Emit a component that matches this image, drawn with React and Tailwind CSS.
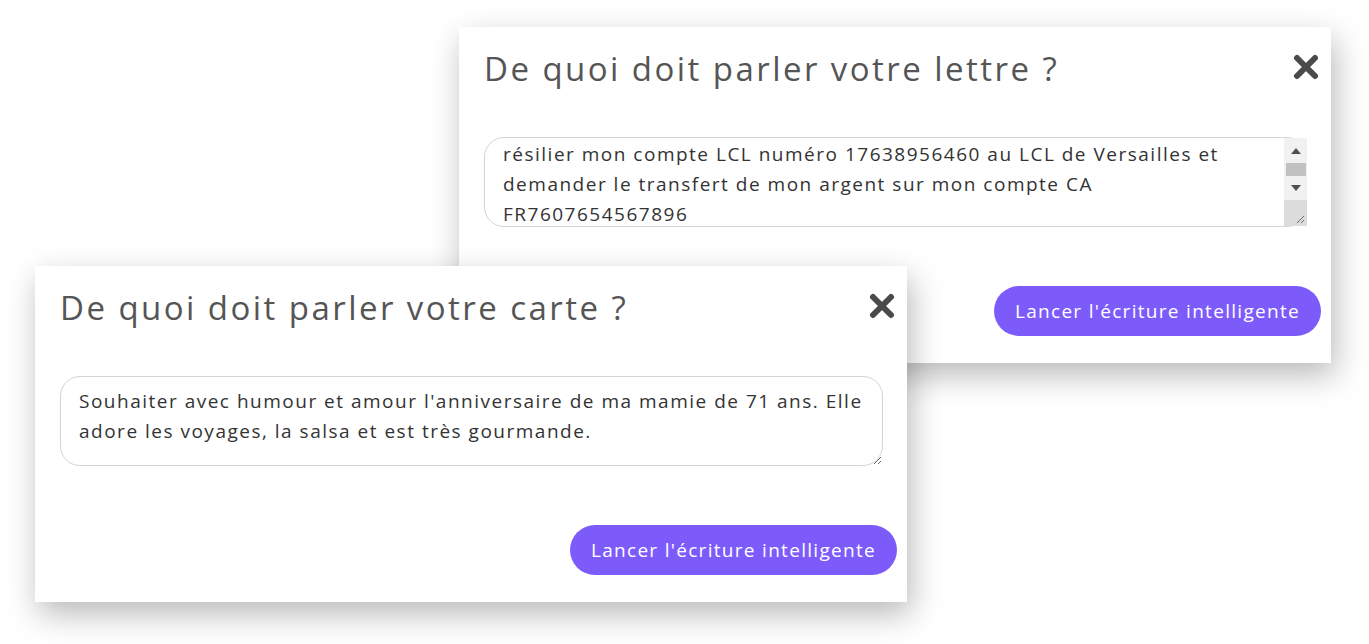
import React, { useEffect, useRef } from 'react';

const CloseIcon = () => (
  <svg width="26" height="26" viewBox="0 0 26 26" className="text-[#4a4a4a]">
    <path d="M4 4L22 22M22 4L4 22" stroke="currentColor" strokeWidth="6" strokeLinecap="round" />
  </svg>
);

// classic scrollbar look drawn over the textarea (the reference shows one)
const FakeScrollbar = () => (
  <div className="absolute right-0 top-[1px] bottom-[1px] w-[23px] flex flex-col">
    <div className="flex-1 bg-[#f1f1f1] flex flex-col items-center pt-[10px]">
      <svg width="10" height="6" viewBox="0 0 10 6">
        <path d="M5 0L10 6H0z" fill="#505050" />
      </svg>
      <div className="mt-[9px] w-[20px] h-[13px] bg-[#c1c1c1]" />
      <svg width="10" height="6" viewBox="0 0 10 6" className="mt-[9px]">
        <path d="M0 0H10L5 6z" fill="#505050" />
      </svg>
    </div>
    <div className="h-[26px] bg-[#dcdcdc] flex items-end justify-end p-[2px]">
      <svg width="10" height="10" viewBox="0 0 10 10">
        <path d="M9 2L2 9M9 6L6 9" stroke="#6b6b6b" strokeWidth="1" />
      </svg>
    </div>
  </div>
);

const PromptCard = ({ title, text, scrollTo, withScrollbar, className }) => {
  const areaRef = useRef(null);

  useEffect(() => {
    if (scrollTo && areaRef.current) {
      areaRef.current.scrollTop = scrollTo;
    }
  }, [scrollTo]);

  return (
    <div
      className={`absolute w-[872px] h-[336px] bg-white flex flex-col shadow-[4px_12px_30px_rgba(0,0,0,0.28)] ${className}`}
    >
      <div className="h-[80px] flex items-center justify-between pl-[25px] pr-[12px]">
        <h2 className="text-[33px] leading-none text-[#555555] tracking-[2.45px] pt-[2px]">{title}</h2>
        <button className="flex items-center justify-center">
          <CloseIcon />
        </button>
      </div>

      <div className="relative mt-[30px] ml-[25px] w-[823px] h-[90px]">
        <textarea
          ref={areaRef}
          defaultValue={text}
          className={`block w-full h-full rounded-[20px] border border-[#d4d4d4] pl-[18px] pt-[9px] pb-[9px] text-[19px] leading-[30px] tracking-[1.5px] text-[#333333] outline-none ${
            withScrollbar ? 'pr-[35px]' : 'pr-[12px]'
          }`}
        />
        {withScrollbar && <FakeScrollbar />}
      </div>

      <button className="self-end mt-[59px] mr-[10px] w-[327px] h-[50px] rounded-full bg-[#7d5bfb] text-white text-[19px] tracking-[1.3px]">
        Lancer l'écriture intelligente
      </button>
    </div>
  );
};

export default function App() {
  return (
    <div
      className="relative w-full h-[644px] bg-white overflow-hidden"
      style={{ fontFamily: '"Open Sans", "Noto Sans", sans-serif' }}
    >
      <PromptCard
        className="left-[459px] top-[27px]"
        title="De quoi doit parler votre lettre ?"
        text={"Rédiger une lettre pour\nrésilier mon compte LCL numéro 17638956460 au LCL de Versailles et demander le transfert de mon argent sur mon compte CA FR7607654567896"}
        scrollTo={38}
        withScrollbar
      />
      <PromptCard
        className="left-[35px] top-[266px]"
        title="De quoi doit parler votre carte ?"
        text="Souhaiter avec humour et amour l'anniversaire de ma mamie de 71 ans. Elle adore les voyages, la salsa et est très gourmande."
      />
    </div>
  );
}
